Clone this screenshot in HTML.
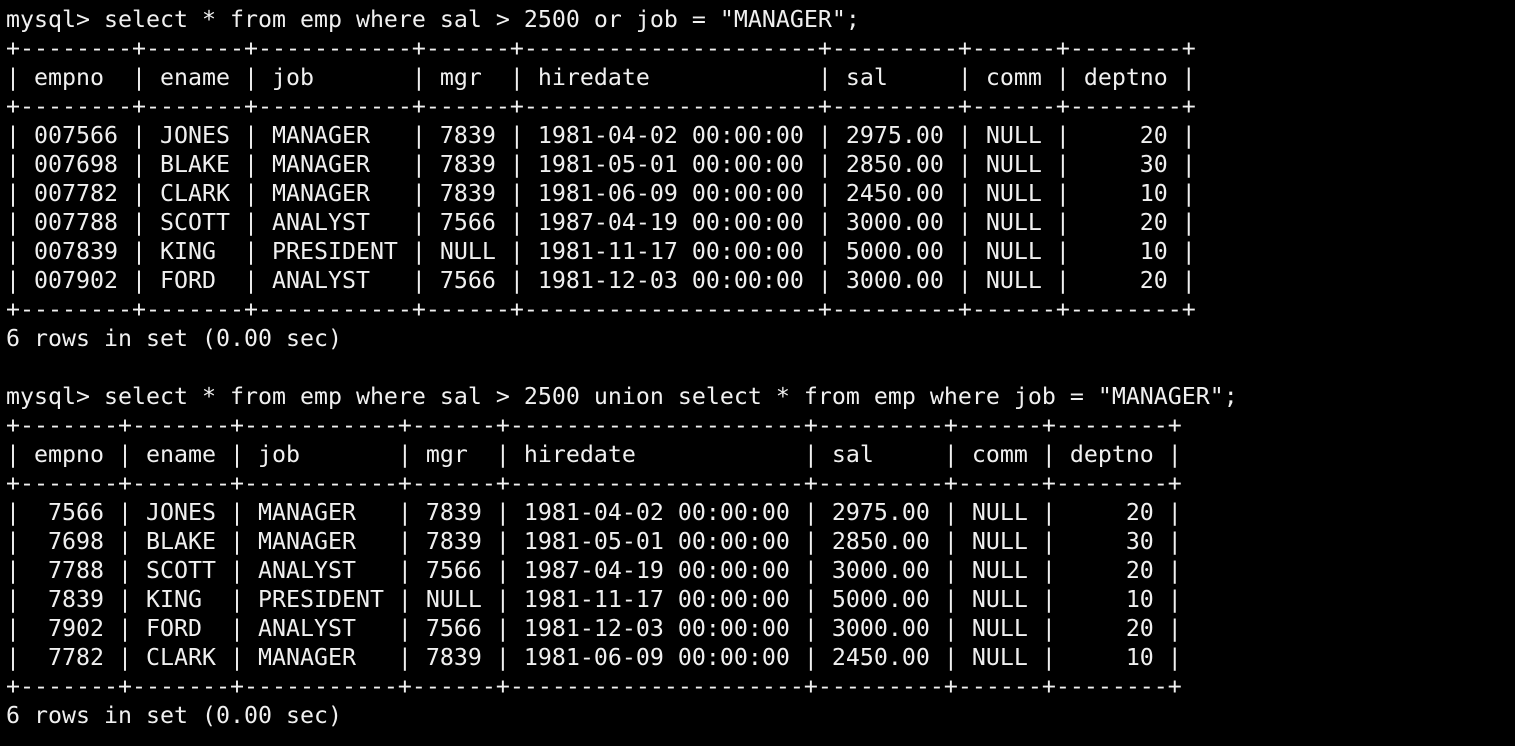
<!DOCTYPE html>
<html><head><meta charset="utf-8"><style>
html,body{margin:0;padding:0;background:#000;width:1515px;height:746px;overflow:hidden}
pre{margin:0;position:absolute;left:6px;top:5px;color:#f0f0f0;font-family:"DejaVu Sans Mono","Liberation Mono",monospace;font-size:23.25px;line-height:29px;white-space:pre}
</style></head><body><pre>mysql&gt; select * from emp where sal &gt; 2500 or job = "MANAGER";
+--------+-------+-----------+------+---------------------+---------+------+--------+
| empno  | ename | job       | mgr  | hiredate            | sal     | comm | deptno |
+--------+-------+-----------+------+---------------------+---------+------+--------+
| 007566 | JONES | MANAGER   | 7839 | 1981-04-02 00:00:00 | 2975.00 | NULL |     20 |
| 007698 | BLAKE | MANAGER   | 7839 | 1981-05-01 00:00:00 | 2850.00 | NULL |     30 |
| 007782 | CLARK | MANAGER   | 7839 | 1981-06-09 00:00:00 | 2450.00 | NULL |     10 |
| 007788 | SCOTT | ANALYST   | 7566 | 1987-04-19 00:00:00 | 3000.00 | NULL |     20 |
| 007839 | KING  | PRESIDENT | NULL | 1981-11-17 00:00:00 | 5000.00 | NULL |     10 |
| 007902 | FORD  | ANALYST   | 7566 | 1981-12-03 00:00:00 | 3000.00 | NULL |     20 |
+--------+-------+-----------+------+---------------------+---------+------+--------+
6 rows in set (0.00 sec)

mysql&gt; select * from emp where sal &gt; 2500 union select * from emp where job = "MANAGER";
+-------+-------+-----------+------+---------------------+---------+------+--------+
| empno | ename | job       | mgr  | hiredate            | sal     | comm | deptno |
+-------+-------+-----------+------+---------------------+---------+------+--------+
|  7566 | JONES | MANAGER   | 7839 | 1981-04-02 00:00:00 | 2975.00 | NULL |     20 |
|  7698 | BLAKE | MANAGER   | 7839 | 1981-05-01 00:00:00 | 2850.00 | NULL |     30 |
|  7788 | SCOTT | ANALYST   | 7566 | 1987-04-19 00:00:00 | 3000.00 | NULL |     20 |
|  7839 | KING  | PRESIDENT | NULL | 1981-11-17 00:00:00 | 5000.00 | NULL |     10 |
|  7902 | FORD  | ANALYST   | 7566 | 1981-12-03 00:00:00 | 3000.00 | NULL |     20 |
|  7782 | CLARK | MANAGER   | 7839 | 1981-06-09 00:00:00 | 2450.00 | NULL |     10 |
+-------+-------+-----------+------+---------------------+---------+------+--------+
6 rows in set (0.00 sec)</pre></body></html>
